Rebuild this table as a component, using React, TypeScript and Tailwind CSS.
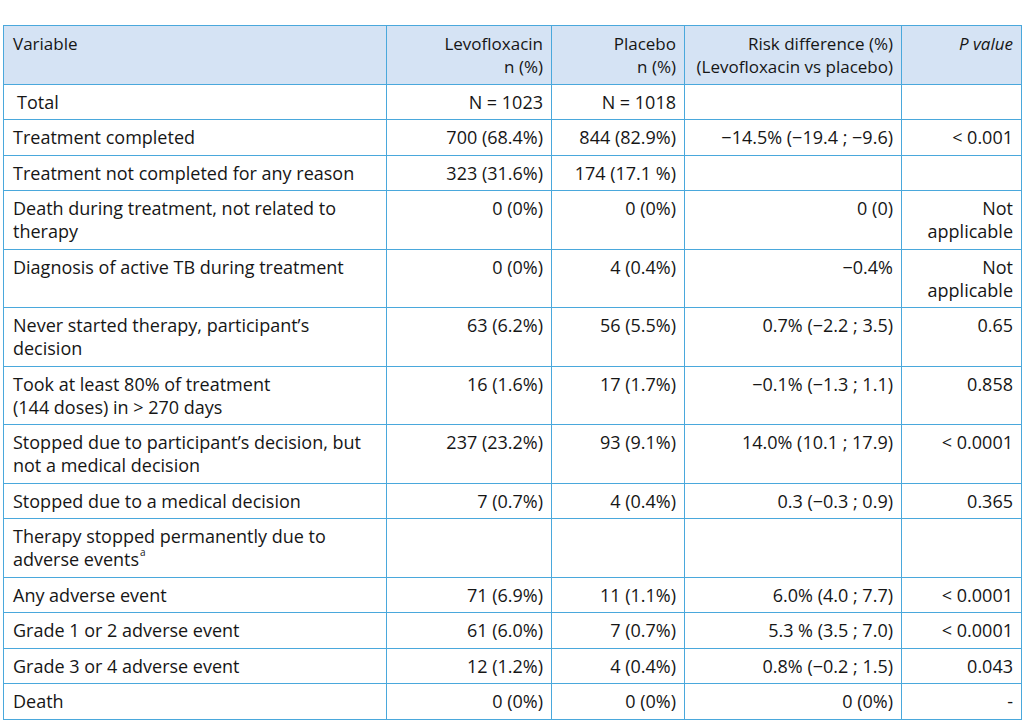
const rows: { label: React.ReactNode; levo: string; placebo: string; risk: string; p: React.ReactNode }[] = [
  { label: <span className="pl-1">Total</span>, levo: "N = 1023", placebo: "N = 1018", risk: "", p: "" },
  { label: "Treatment completed", levo: "700 (68.4%)", placebo: "844 (82.9%)", risk: "−14.5% (−19.4 ; −9.6)", p: "< 0.001" },
  { label: "Treatment not completed for any reason", levo: "323 (31.6%)", placebo: "174 (17.1 %)", risk: "", p: "" },
  { label: <>Death during treatment, not related to<br />therapy</>, levo: "0 (0%)", placebo: "0 (0%)", risk: "0 (0)", p: <>Not<br />applicable</> },
  { label: "Diagnosis of active TB during treatment", levo: "0 (0%)", placebo: "4 (0.4%)", risk: "−0.4%", p: <>Not<br />applicable</> },
  { label: <>Never started therapy, participant’s<br />decision</>, levo: "63 (6.2%)", placebo: "56 (5.5%)", risk: "0.7% (−2.2 ; 3.5)", p: "0.65" },
  { label: <>Took at least 80% of treatment<br />(144 doses) in &gt; 270 days</>, levo: "16 (1.6%)", placebo: "17 (1.7%)", risk: "−0.1% (−1.3 ; 1.1)", p: "0.858" },
  { label: <>Stopped due to participant’s decision, but<br />not a medical decision</>, levo: "237 (23.2%)", placebo: "93 (9.1%)", risk: "14.0% (10.1 ; 17.9)", p: "< 0.0001" },
  { label: "Stopped due to a medical decision", levo: "7 (0.7%)", placebo: "4 (0.4%)", risk: "0.3 (−0.3 ; 0.9)", p: "0.365" },
  { label: <>Therapy stopped permanently due to<br />adverse events<sup className="text-[10px] leading-none align-[5px] ml-[1px]">a</sup></>, levo: "", placebo: "", risk: "", p: "" },
  { label: "Any adverse event", levo: "71 (6.9%)", placebo: "11 (1.1%)", risk: "6.0% (4.0 ; 7.7)", p: "< 0.0001" },
  { label: "Grade 1 or 2 adverse event", levo: "61 (6.0%)", placebo: "7 (0.7%)", risk: "5.3 % (3.5 ; 7.0)", p: "< 0.0001" },
  { label: "Grade 3 or 4 adverse event", levo: "12 (1.2%)", placebo: "4 (0.4%)", risk: "0.8% (−0.2 ; 1.5)", p: "0.043" },
  { label: "Death", levo: "0 (0%)", placebo: "0 (0%)", risk: "0 (0%)", p: "-" },
];

const cell = "border border-[#4aa8dc] pl-[9px] pr-[8px] pt-[6px] pb-[5.5px] align-top leading-[23px]";

export default function App() {
  return (
    <div className="bg-white w-[1024px] h-[723px] pt-[25px] pl-[3px] text-[#161616] text-[18px] font-['Open_Sans',sans-serif]">
      <table className="border-collapse w-[1018px] table-fixed">
        <colgroup>
          <col className="w-[383px]" />
          <col className="w-[165px]" />
          <col className="w-[133px]" />
          <col className="w-[217px]" />
          <col className="w-[120px]" />
        </colgroup>
        <thead>
          <tr className="bg-[#d5e3f4] text-[17px]">
            <th className={`${cell} text-left font-normal`}>Variable</th>
            <th className={`${cell} text-right font-normal`}>Levofloxacin<br />n (%)</th>
            <th className={`${cell} text-right font-normal`}>Placebo<br />n (%)</th>
            <th className={`${cell} text-right font-normal`}>Risk difference (%)<br />(Levofloxacin vs placebo)</th>
            <th className={`${cell} text-right font-normal italic`}>P value</th>
          </tr>
        </thead>
        <tbody>
          {rows.map((r, i) => (
            <tr key={i}>
              <td className={`${cell} text-left`}>{r.label}</td>
              <td className={`${cell} text-right`}>{r.levo}</td>
              <td className={`${cell} text-right`}>{r.placebo}</td>
              <td className={`${cell} text-right`}>{r.risk}</td>
              <td className={`${cell} text-right`}>{r.p}</td>
            </tr>
          ))}
        </tbody>
      </table>
    </div>
  );
}
